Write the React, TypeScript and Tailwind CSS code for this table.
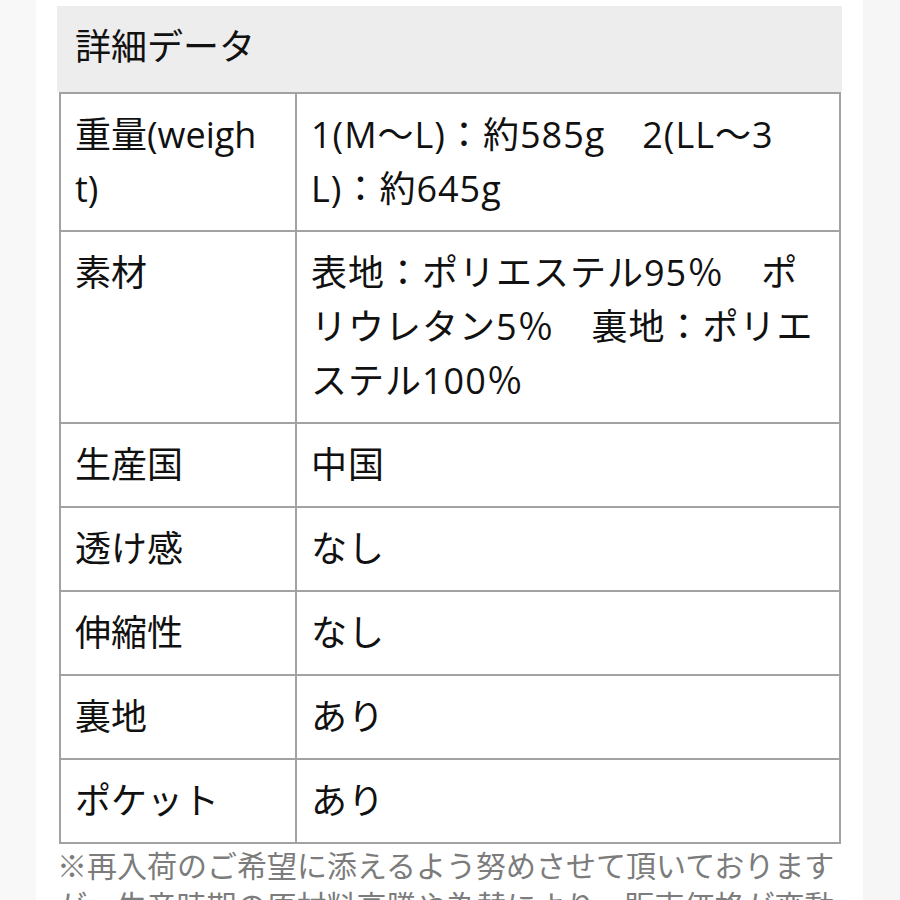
import React from 'react';

const rows: { label: React.ReactNode; value: React.ReactNode }[] = [
  { label: <>重量(weigh<br />t)</>, value: <>1(M〜L)：約585g　2(LL〜3<br />L)：約645g</> },
  {
    label: '素材',
    value: <>表地：ポリエステル95％　ポ<br />リウレタン5％　裏地：ポリエ<br />ステル100％</>,
  },
  { label: '生産国', value: '中国' },
  { label: '透け感', value: 'なし' },
  { label: '伸縮性', value: 'なし' },
  { label: '裏地', value: 'あり' },
  { label: 'ポケット', value: 'あり' },
];

const DetailTable = () => (
  <div className="pl-[2px] pr-[1px]">
    <table className="w-full border-collapse">
      <tbody>
        {rows.map((row, i) => (
          <tr key={i}>
            <td className="w-[236px] border-2 border-[#a2a2a2] px-[14px] py-[14px] align-top whitespace-nowrap">
              {row.label}
            </td>
            <td className="border-2 border-[#a2a2a2] px-[14px] py-[14px] align-top whitespace-nowrap tracking-[1px]">
              {row.value}
            </td>
          </tr>
        ))}
      </tbody>
    </table>
  </div>
);

export default function App() {
  return (
    <div
      className="flex h-[900px] w-full overflow-hidden bg-white text-[#111111]"
      style={{ fontFamily: '"Open Sans", "Noto Sans CJK JP", sans-serif' }}
    >
      <div className="w-[36px] shrink-0 bg-[#f8f8f8]" />
      <div className="flex-1 bg-white px-[21px] pt-[6px]">
        <div className="flex h-[86px] items-center bg-[#ededed] pb-[4px] pl-[18px] text-[36px] leading-[54px]">
          詳細データ
        </div>
        <div className="text-[36px] leading-[54px]">
          <DetailTable />
        </div>
        <p className="mt-[2px] text-[30px] leading-[40px] text-[#7c7c7c] whitespace-nowrap">
          ※再入荷のご希望に添えるよう努めさせて頂いております
          <br />
          が、生産時期の原材料高騰や為替により、販売価格が変動
        </p>
      </div>
      <div className="w-[37px] shrink-0 bg-[#f6f6f6]" />
    </div>
  );
}
